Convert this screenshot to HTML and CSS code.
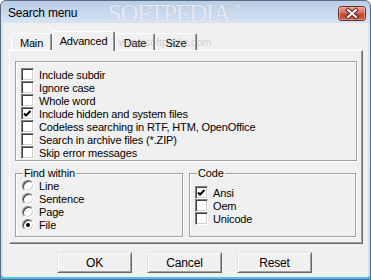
FILE: index.html
```html
<!DOCTYPE html>
<html>
<head>
<meta charset="utf-8">
<link rel="stylesheet" href="styles.css">
</head>
<body>
<div class="window">
  <div class="titlebar">
    <span class="title">Search menu</span>
    <span class="close">
      <svg width="28" height="15" viewBox="0 0 28 15">
        <defs>
          <linearGradient id="rg" x1="0" y1="0" x2="0" y2="1">
            <stop offset="0" stop-color="#e8a89c"/>
            <stop offset="0.45" stop-color="#d2705f"/>
            <stop offset="0.55" stop-color="#c0432f"/>
            <stop offset="1" stop-color="#c9604a"/>
          </linearGradient>
        </defs>
        <rect x="0.5" y="0.5" width="27" height="14" rx="3" fill="url(#rg)" stroke="#6b2a22"/>
        <rect x="1.5" y="1.5" width="25" height="12" rx="2" fill="none" stroke="#f0c0b6" stroke-opacity="0.6"/>
        <path d="M10 4 L18 11 M18 4 L10 11" stroke="#5a2018" stroke-width="4" stroke-linecap="square"/>
        <path d="M10 4 L18 11 M18 4 L10 11" stroke="#ffffff" stroke-width="2" stroke-linecap="square"/>
      </svg>
    </span>
  </div>
  <div class="client">
    <div class="tabs">
      <div class="tab">Main</div>
      <div class="tab active">Advanced</div>
      <div class="tab tab-date">Date</div>
      <div class="tab tab-size">Size</div>
    </div>
    <div class="panel">
      <div class="options">
        <div class="row"><span class="check"></span><span>Include subdir</span></div>
        <div class="row"><span class="check"></span><span>Ignore case</span></div>
        <div class="row"><span class="check"></span><span>Whole word</span></div>
        <div class="row"><span class="check on"><svg width="9" height="9" viewBox="0 0 9 9"><path d="M1 3.5 L3 5.5 L7.5 1" fill="none" stroke="#000" stroke-width="2"/></svg></span><span>Include hidden and system files</span></div>
        <div class="row"><span class="check"></span><span>Codeless searching in RTF, HTM, OpenOffice</span></div>
        <div class="row"><span class="check"></span><span>Search in archive files (*.ZIP)</span></div>
        <div class="row"><span class="check"></span><span>Skip error messages</span></div>
      </div>
      <div class="groups">
        <div class="group group-find">
          <div class="group-title">Find within</div>
          <div class="row"><span class="radio"></span><span>Line</span></div>
          <div class="row"><span class="radio"></span><span>Sentence</span></div>
          <div class="row"><span class="radio"></span><span>Page</span></div>
          <div class="row"><span class="radio on"></span><span>File</span></div>
        </div>
        <div class="group group-code">
          <div class="group-title">Code</div>
          <div class="code-rows">
            <div class="row"><span class="check"><svg width="9" height="9" viewBox="0 0 9 9"><path d="M1 3.5 L3 5.5 L7.5 1" fill="none" stroke="#000" stroke-width="2"/></svg></span><span>Ansi</span></div>
            <div class="row"><span class="check"></span><span>Oem</span></div>
            <div class="row"><span class="check"></span><span>Unicode</span></div>
          </div>
        </div>
      </div>
    </div>
    <div class="buttons">
      <div class="btn">OK</div>
      <div class="btn">Cancel</div>
      <div class="btn">Reset</div>
    </div>
  </div>
  <div class="wm-big">SOFTPEDIA<span class="tm">™</span></div>
  <div class="wm-small">www.softpedia.com</div>
</div>
</body>
</html>
```
FILE: styles.css
```css
html, body {
  margin: 0;
  padding: 0;
}
body {
  width: 371px;
  height: 280px;
  overflow: hidden;
  font-family: "Liberation Sans", Arial, sans-serif;
  font-size: 11px;
  letter-spacing: -0.15px;
  color: #000;
  background: #ffffff;
}
.window {
  box-sizing: border-box;
  width: 371px;
  height: 280px;
  border: 1px solid #5b6b7e;
  border-radius: 6px 6px 0 0;
  padding: 0 2px 2px 2px;
  display: flex;
  flex-direction: column;
  position: relative;
  background: linear-gradient(to bottom, #b9cde6 0, #d6e3f2 22px, #d2e1f1 275px, #47c1ee 275px, #47c1ee 280px);
}
.titlebar {
  height: 22px;
  flex: none;
  display: flex;
  align-items: center;
  justify-content: space-between;
  padding: 0 2px 0 5px;
}
.title {
  font-size: 12px;
  letter-spacing: -0.2px;
  color: #000;
  margin-top: 1px;
}
.close {
  display: flex;
  width: 28px;
  height: 15px;
  margin-top: 2px;
}
.client {
  background: #f0f0f0;
  height: 254px;
  flex: none;
  padding: 8px 5px 0 6px;
  box-sizing: border-box;
}
.tabs {
  display: flex;
  align-items: flex-end;
  height: 19px;
  padding-left: 2px;
}
.tab {
  box-sizing: border-box;
  height: 17px;
  border-style: solid;
  border-width: 1px 1px 0 1px;
  border-color: #ffffff #696969 transparent #ffffff;
  box-shadow: inset -1px 0 #a0a0a0;
  border-radius: 2px 2px 0 0;
  display: flex;
  align-items: center;
  justify-content: center;
  padding-top: 1px;
  width: 41px;
  background: #f0f0f0;
}
.tab.active {
  width: 63px;
  height: 20px;
  margin-bottom: -1px;
  padding-top: 0;
  padding-bottom: 2px;
  position: relative;
  z-index: 1;
}
.tab-date { width: 40px; }
.tab-size { width: 42px; }
.panel {
  box-sizing: border-box;
  height: 194px;
  border: 1px solid;
  border-color: #ffffff #696969 #696969 #ffffff;
  box-shadow: inset -1px -1px #a0a0a0;
  padding: 10px 5px 0 5px;
}
.options {
  border: 1px solid #a0a0a0;
  box-shadow: 1px 1px #ffffff, inset 1px 1px #ffffff;
  padding: 6px 0 1px 5px;
}
.row {
  display: flex;
  align-items: center;
  height: 13px;
  gap: 5px;
  white-space: nowrap;
}
.check {
  box-sizing: border-box;
  width: 13px;
  height: 13px;
  flex: none;
  background: #ffffff;
  border: 1px solid;
  border-color: #808080 #ffffff #ffffff #808080;
  box-shadow: inset 1px 1px #404040, inset -1px -1px #d4d0c8;
  display: flex;
  align-items: center;
  justify-content: center;
}
.check svg {
  display: block;
  margin-top: 1px;
}
.radio {
  box-sizing: border-box;
  width: 12px;
  height: 12px;
  flex: none;
  border-radius: 50%;
  background: #ffffff;
  border: 1px solid;
  border-color: #808080 #ffffff #ffffff #808080;
  box-shadow: inset 1px 1px #404040, inset -1px -1px #d4d0c8;
  display: flex;
  align-items: center;
  justify-content: center;
}
.radio.on::after {
  content: "";
  width: 4px;
  height: 4px;
  border-radius: 50%;
  background: #000;
}
.groups {
  display: flex;
  gap: 6px;
  margin-top: 12px;
}
.group {
  box-sizing: border-box;
  height: 64px;
  border: 1px solid #a0a0a0;
  box-shadow: 1px 1px #ffffff, inset 1px 1px #ffffff;
}
.group-find {
  width: 168px;
  padding-left: 6px;
}
.group-code {
  width: 167px;
  padding-left: 5px;
}
.group-title {
  width: fit-content;
  height: 12px;
  line-height: 12px;
  margin: -7px 0 0 1px;
  padding: 0 1px;
  background: #f0f0f0;
}
.group-code .group-title {
  margin-left: 2px;
}
.code-rows {
  padding-top: 7px;
}
.buttons {
  display: flex;
  gap: 15px;
  margin-top: 8px;
  padding-left: 48px;
}
.btn {
  box-sizing: border-box;
  width: 75px;
  height: 21px;
  border: 1px solid;
  border-color: #e3e3e3 #696969 #696969 #e3e3e3;
  box-shadow: inset 1px 1px #ffffff, inset -1px -1px #a0a0a0;
  display: flex;
  align-items: center;
  justify-content: center;
  font-size: 12px;
}
.wm-big {
  position: absolute;
  left: 107px;
  top: -1px;
  font-family: "Liberation Serif", "Times New Roman", serif;
  font-size: 25px;
  letter-spacing: -1.5px;
  color: rgba(255, 255, 255, 0.7);
  text-shadow: 0 0 1px rgba(110, 130, 160, 0.4);
  pointer-events: none;
}
.tm {
  font-family: "Liberation Sans", Arial, sans-serif;
  font-size: 8px;
  letter-spacing: 0;
  vertical-align: 12px;
  margin-left: 3px;
}
.wm-small {
  position: absolute;
  left: 118px;
  top: 35px;
  font-size: 11px;
  color: rgba(150, 150, 150, 0.35);
  pointer-events: none;
}
```
